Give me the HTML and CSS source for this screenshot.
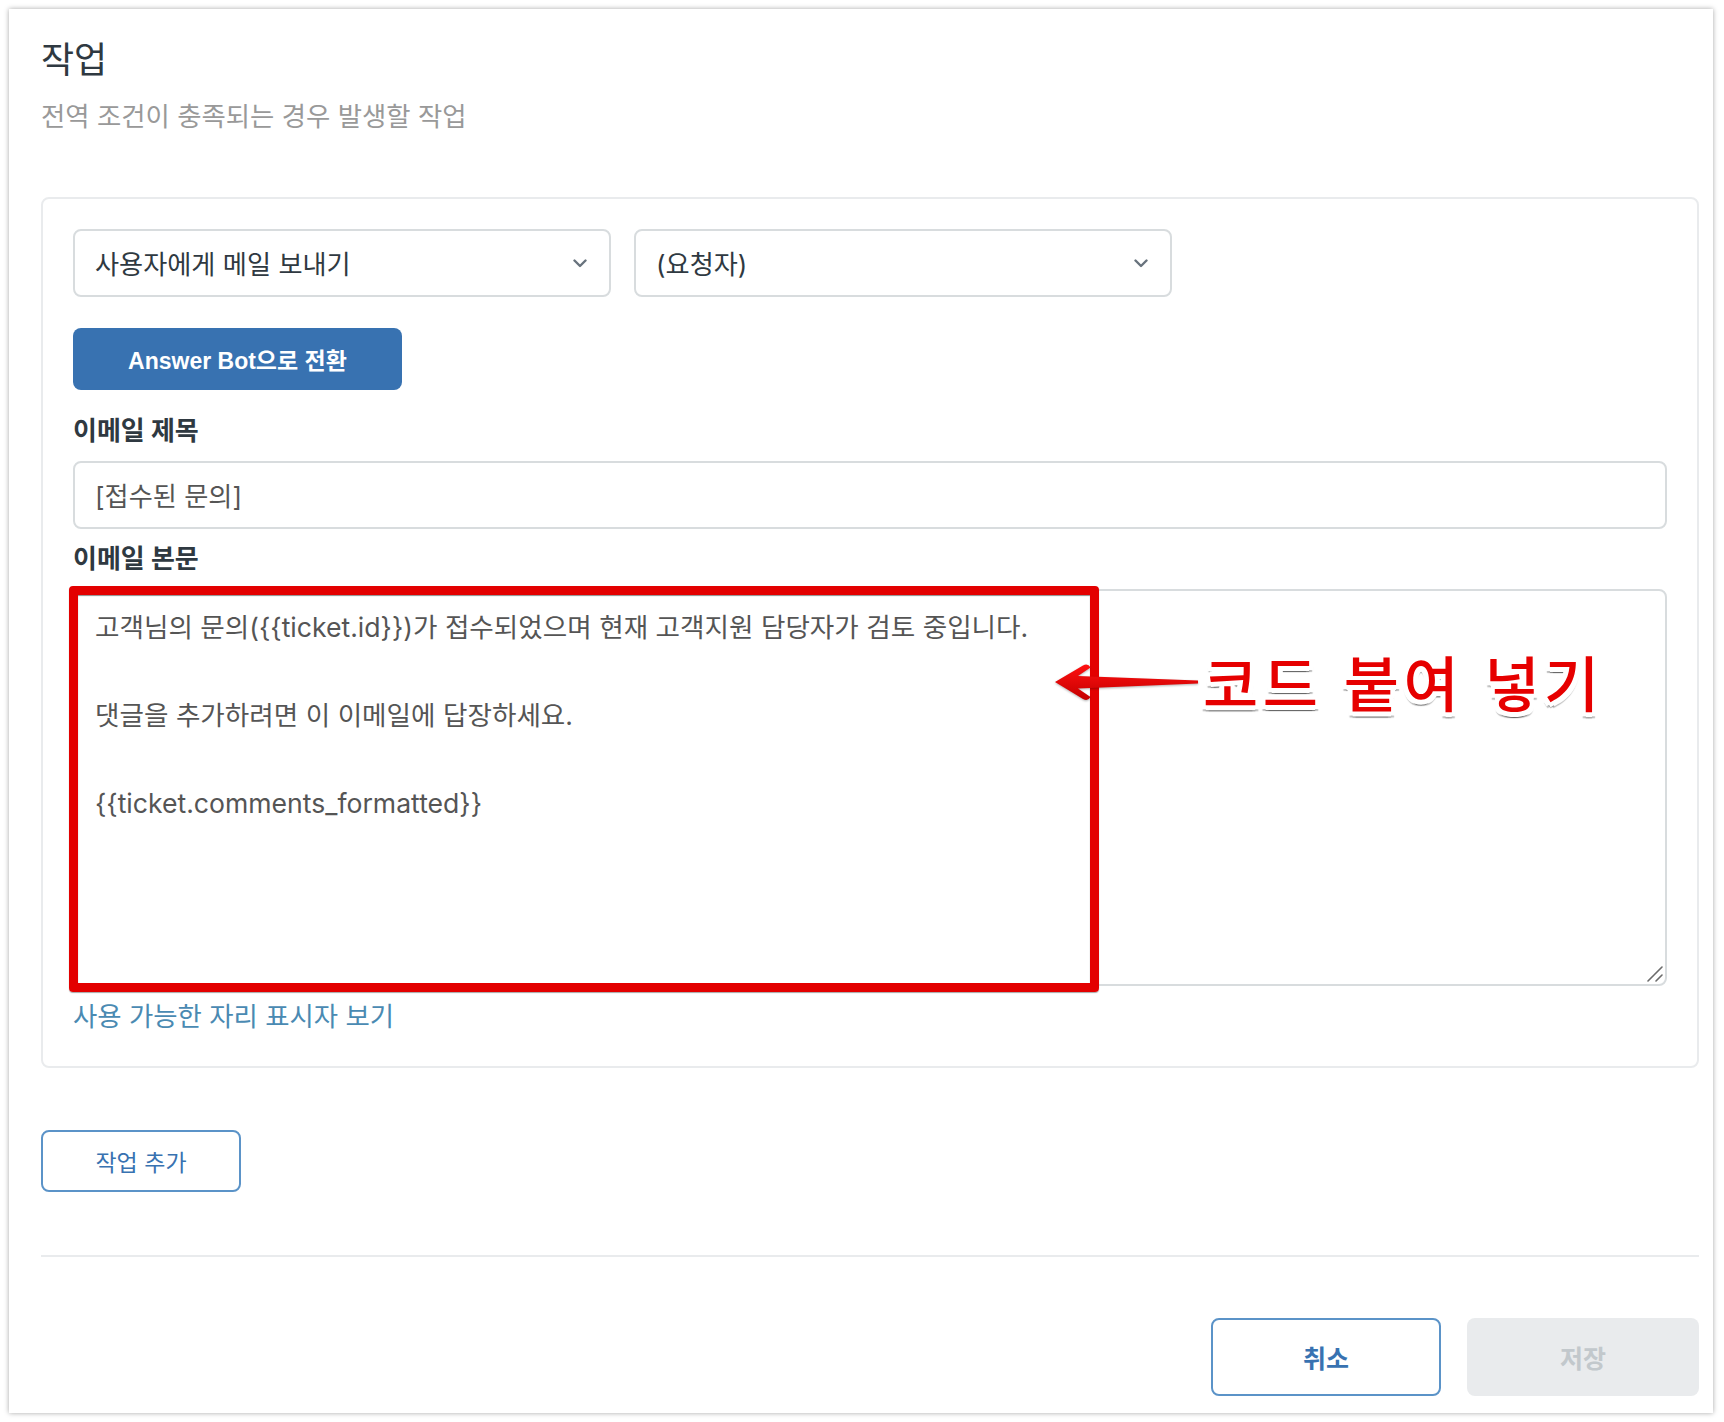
FILE: index.html
```html
<!DOCTYPE html>
<html lang="ko">
<head>
    <meta charset="UTF-8">
    <meta name="viewport" content="width=device-width, initial-scale=1.0">
    <title>작업</title>
    <link rel="stylesheet" href="styles.css">
</head>
<body>
    <div class="panel">
        <h1 class="title">작업</h1>
        <p class="subtitle">전역 조건이 충족되는 경우 발생할 작업</p>

        <div class="action-card">
            <div class="select-row">
                <div class="select">
                    <span>사용자에게 메일 보내기</span>
                    <svg class="chevron" viewBox="0 0 14 9" width="14" height="9"><path d="M1.5 1.5 L7 7 L12.5 1.5" fill="none" stroke="#68737d" stroke-width="2.4" stroke-linecap="round" stroke-linejoin="round"/></svg>
                </div>
                <div class="select">
                    <span>(요청자)</span>
                    <svg class="chevron" viewBox="0 0 14 9" width="14" height="9"><path d="M1.5 1.5 L7 7 L12.5 1.5" fill="none" stroke="#68737d" stroke-width="2.4" stroke-linecap="round" stroke-linejoin="round"/></svg>
                </div>
            </div>

            <button class="btn-primary" type="button">Answer Bot으로 전환</button>

            <label class="field-label">이메일 제목</label>
            <div class="input">[접수된 문의]</div>

            <label class="field-label">이메일 본문</label>
            <div class="body-wrap">
                <div class="textarea">
                    <p>고객님의 문의({{ticket.id}})가 접수되었으며 현재 고객지원 담당자가 검토 중입니다.</p>
                    <p>댓글을 추가하려면 이 이메일에 답장하세요.</p>
                    <p>{{ticket.comments_formatted}}</p>
                    <svg class="grip" viewBox="0 0 16 16" width="16" height="16"><path d="M1 15 L15 1 M9 15 L15 9" stroke="#6b6b6b" stroke-width="1.6" stroke-linecap="round"/></svg>
                </div>

                <!-- annotation -->
                <div class="highlight"></div>
                <svg class="arrow" viewBox="0 0 146 40" width="146" height="40">
                    <defs>
                        <linearGradient id="arrowFill" x1="0" y1="0" x2="0" y2="1">
                            <stop offset="0" stop-color="#ff1010"/>
                            <stop offset="1" stop-color="#c40000"/>
                        </linearGradient>
                    </defs>
                    <path d="M2 19 L30 2.5 Q35 0 37.5 4.5 L25 13 L145 17.5 L145 20.5 L25 25.5 L37.5 34 Q35 38.5 30 36 Z" fill="url(#arrowFill)"/>
                </svg>
                <span class="callout">코드 붙여 넣기</span>
            </div>

            <a class="link" href="#">사용 가능한 자리 표시자 보기</a>
        </div>

        <button class="btn-outline btn-add" type="button">작업 추가</button>

        <hr class="divider">

        <div class="footer">
            <button class="btn-outline btn-cancel" type="button">취소</button>
            <button class="btn-save" type="button" disabled>저장</button>
        </div>
    </div>
</body>
</html>
```

FILE: styles.css
```css
:root {
    --text-dark: #2f3941;
    --text-body: #555;
    --muted: #999;
    --border: #d8dcde;
    --border-light: #e9ebed;
    --blue: #3872b1;
    --blue-border: #5b93c8;
    --link: #4a8ab2;
    --radius: 8px;
}

* {
    margin: 0;
    padding: 0;
    box-sizing: border-box;
}

body {
    background-color: #fff;
    padding: 9px 11px 9px 9px;
    font-family: 'Inter', 'Noto Sans CJK KR', sans-serif;
    color: var(--text-dark);
}

.panel {
    width: 1704px;
    background-color: #fff;
    box-shadow: 0 0 5px rgba(0, 0, 0, 0.35);
    padding: 27px 14px 17px 32px;
}

.title {
    font-size: 36px;
    line-height: 48px;
    font-weight: 400;
    color: var(--text-dark);
}

.subtitle {
    margin-top: 14px;
    font-size: 26.4px;
    line-height: 36px;
    color: var(--muted);
}

.action-card {
    margin-top: 63px;
    border: 2px solid var(--border-light);
    border-radius: var(--radius);
    padding: 30px 30px 32px 30px;
    display: flex;
    flex-direction: column;
    align-items: flex-start;
}

.select-row {
    display: flex;
    gap: 23px;
}

.select {
    width: 538px;
    height: 68px;
    border: 2px solid var(--border);
    border-radius: var(--radius);
    padding: 0 22px 0 20px;
    display: flex;
    align-items: center;
    justify-content: space-between;
    font-size: 26.2px;
    color: var(--text-dark);
}

.chevron {
    display: block;
}

button {
    font-family: inherit;
    cursor: pointer;
}

.btn-primary {
    margin-top: 31px;
    width: 329px;
    height: 62px;
    border: none;
    border-radius: var(--radius);
    background-color: var(--blue);
    color: #fff;
    font-family: 'Liberation Sans', 'Noto Sans CJK KR', sans-serif;
    font-size: 23px;
    font-weight: 700;
}

.field-label {
    display: block;
    margin-top: 23px;
    font-size: 26px;
    line-height: 36px;
    font-weight: 700;
    color: var(--text-dark);
}

.input + .field-label {
    margin-top: 12px;
}

.input {
    margin-top: 12px;
    width: 100%;
    height: 68px;
    border: 2px solid var(--border);
    border-radius: var(--radius);
    padding: 0 20px;
    display: flex;
    align-items: center;
    font-size: 26.2px;
    color: var(--text-body);
}

.body-wrap {
    position: relative;
    margin-top: 12px;
    width: 100%;
}

.textarea {
    position: relative;
    height: 397px;
    border: 2px solid var(--border);
    border-radius: var(--radius);
    padding: 14px 20px;
    font-size: 26.6px;
    line-height: 44px;
    color: var(--text-body);
}

.textarea p {
    margin-bottom: 44px;
}

.grip {
    position: absolute;
    right: 2px;
    bottom: 2px;
}

.highlight {
    position: absolute;
    left: -4px;
    top: -3px;
    width: 1030px;
    height: 406px;
    border: 9px solid #e30000;
    border-radius: 4px;
    box-shadow: inset 0 1px 1px rgba(0, 0, 0, 0.45), 0 1px 1px rgba(0, 0, 0, 0.35);
}

.arrow {
    position: absolute;
    left: 980px;
    top: 74px;
    filter: drop-shadow(0 1px 1px rgba(0, 0, 0, 0.3));
}

.callout {
    position: absolute;
    left: 1130px;
    top: 57px;
    font-family: 'Noto Sans CJK KR', sans-serif;
    font-size: 60px;
    line-height: 70px;
    font-weight: 500;
    letter-spacing: 4.5px;
    color: #e60000;
    white-space: nowrap;
    text-shadow:
        3px 0 0 #fff, -3px 0 0 #fff, 0 3px 0 #fff, 0 -3px 0 #fff,
        3px 3px 0 #fff, -3px -3px 0 #fff, 3px -3px 0 #fff, -3px 3px 0 #fff,
        5px 0 0 #fff, -5px 0 0 #fff, 0 5px 0 #fff, 0 -5px 0 #fff,
        4px 4px 0 #fff, -4px 4px 0 #fff, 4px -4px 0 #fff, -4px -4px 0 #fff,
        0 6px 1px rgba(0, 0, 0, 0.35), 3px 6px 1px rgba(0, 0, 0, 0.25), -3px 6px 1px rgba(0, 0, 0, 0.25);
}

.link {
    display: block;
    margin-top: 12px;
    font-size: 26.4px;
    line-height: 36px;
    color: var(--link);
    text-decoration: none;
}

.btn-outline {
    background-color: #fff;
    border: 2px solid var(--blue-border);
    border-radius: var(--radius);
    color: var(--blue);
}

.btn-add {
    margin-top: 62px;
    width: 200px;
    height: 62px;
    font-size: 23px;
}

.divider {
    margin-top: 63px;
    border: none;
    height: 2px;
    background-color: var(--border-light);
}

.footer {
    margin-top: 61px;
    display: flex;
    justify-content: flex-end;
    gap: 26px;
}

.btn-cancel {
    width: 230px;
    height: 78px;
    font-size: 25px;
    font-weight: 700;
}

.btn-save {
    width: 232px;
    height: 78px;
    border: none;
    border-radius: var(--radius);
    background-color: var(--border-light);
    color: #c2c8cc;
    font-size: 25px;
    font-weight: 700;
    cursor: default;
}
```
